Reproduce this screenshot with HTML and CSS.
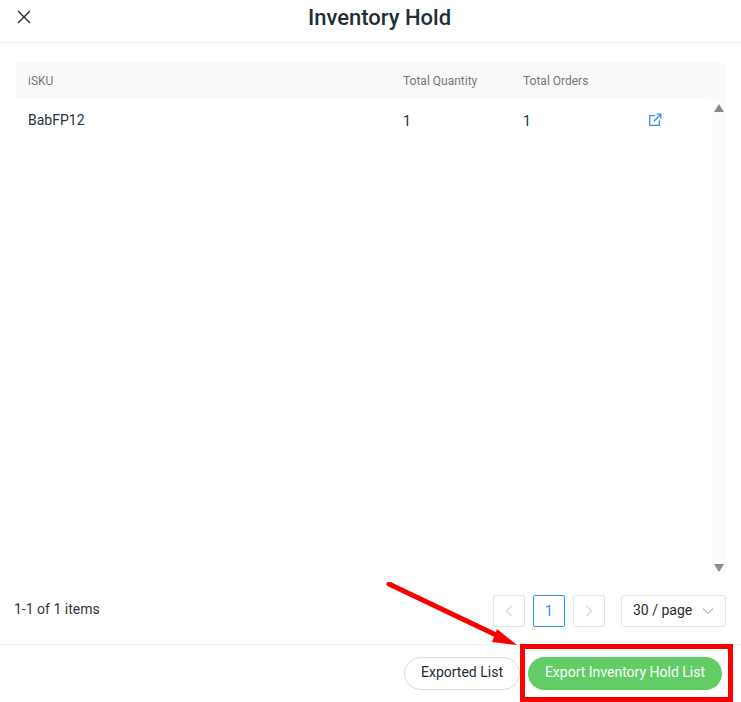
FILE: index.html
```html
<!DOCTYPE html>
<html lang="en">
<head>
<meta charset="utf-8">
<title>Inventory Hold</title>
<link rel="stylesheet" href="styles.css">
</head>
<body>
<div class="drawer">
  <header class="head">
    <svg class="close" width="14" height="14" viewBox="0 0 14 14"><path d="M1 1l12 12M13 1L1 13" stroke="#1f2d33" stroke-width="1.4" fill="none"/></svg>
    <h1 class="title">Inventory Hold</h1>
  </header>
  <main class="body">
    <div class="thead">
      <div class="c-sku">iSKU</div>
      <div class="c-qty">Total Quantity</div>
      <div class="c-ord">Total Orders</div>
    </div>
    <div class="tbody">
      <div class="rows">
        <div class="row">
          <div class="c-sku sku">BabFP12</div>
          <div class="c-qty num">1</div>
          <div class="c-ord num">1</div>
          <svg class="link" width="14" height="14" viewBox="0 0 14 14" fill="none" stroke="#2f8df5" stroke-width="1.3"><path d="M7 2.6H1.7v9.8h9.7V7.2"/><path d="M5.6 8.5L12.6 1.5M8.6 1.2h4.2v4.2"/></svg>
        </div>
      </div>
      <div class="scroll">
        <span class="tri up"></span>
        <span class="tri down"></span>
      </div>
    </div>
    <div class="pager">
      <div class="total">1-1 of 1 items</div>
      <div class="pages">
        <div class="pg"><svg width="8" height="12" viewBox="0 0 8 12"><path d="M6.5 1L1.5 6l5 5" stroke="#d2d5d7" stroke-width="1.1" fill="none"/></svg></div>
        <div class="pg on">1</div>
        <div class="pg"><svg width="8" height="12" viewBox="0 0 8 12"><path d="M1.5 1l5 5-5 5" stroke="#d2d5d7" stroke-width="1.1" fill="none"/></svg></div>
        <div class="size"><span class="size-text">30 / page</span><svg width="12" height="8" viewBox="0 0 12 8"><path d="M1 1.5l5 5 5-5" stroke="#b8bcbf" stroke-width="1.1" fill="none"/></svg></div>
      </div>
    </div>
  </main>
  <footer class="foot">
    <button class="btn ghost">Exported List</button>
    <button class="btn primary">Export Inventory Hold List</button>
  </footer>
</div>
<svg class="arrow" width="150" height="80" viewBox="0 0 150 80"><path d="M3 2L108 52" stroke="#f60000" stroke-width="5" stroke-linecap="round" fill="none"/><path d="M131 63L106 60L111 47Z" fill="#f60000"/></svg>
<div class="mark"></div>
</body>
</html>
```
FILE: styles.css
```css
* { box-sizing: border-box; }
html, body { margin: 0; padding: 0; }
body {
  position: relative;
  width: 741px;
  height: 702px;
  overflow: hidden;
  background: #fff;
  font-family: Roboto, "Liberation Sans", sans-serif;
  color: #1f2d33;
}
.drawer { display: flex; flex-direction: column; height: 702px; }
.head {
  height: 43px;
  flex: none;
  display: flex;
  align-items: center;
  justify-content: center;
  border-bottom: 1px solid #eceeef;
  position: relative;
  padding: 0 0 7px 18px;
}
.close { position: absolute; left: 17px; top: 10px; }
.title { margin: 0; font-size: 22px; font-weight: 500; line-height: 32px; color: #1f3038; }
.body { flex: 1; padding: 20px 15px 0 16px; display: flex; flex-direction: column; }
.thead {
  height: 36px;
  background: #f9f9f9;
  display: flex;
  align-items: center;
  font-size: 12px;
  color: #6f7a80;
}
.c-sku { width: 387px; padding-left: 12px; flex: none; }
.c-qty { width: 120px; flex: none; }
.c-ord { width: 120px; flex: none; }
.tbody { height: 476px; display: flex; }
.rows { flex: 1; }
.row { display: flex; align-items: flex-start; position: relative; height: 44px; padding-top: 12px; }
.sku { font-size: 14px; line-height: 18px; color: #26333a; }
.num { font-size: 14px; line-height: 20px; color: #1f2d33; }
.link { margin-left: 5px; margin-top: 2px; }
.scroll {
  width: 15px;
  flex: none;
  background: #fbfbfb;
  display: flex;
  flex-direction: column;
  justify-content: space-between;
  align-items: center;
  padding: 5px 0 3px;
}
.tri { width: 0; height: 0; border-left: 5px solid transparent; border-right: 5px solid transparent; }
.tri.up { border-bottom: 8px solid #8a8a8a; }
.tri.down { border-top: 8px solid #8a8a8a; }
.pager { display: flex; justify-content: space-between; align-items: center; height: 32px; margin-top: 20px; margin-left: -2px; }
.total { font-size: 14px; color: #2b383f; position: relative; top: -2px; }
.pages { display: flex; gap: 8px; }
.pg {
  width: 32px;
  height: 32px;
  border: 1px solid #e2e4e5;
  border-radius: 2px;
  display: flex;
  align-items: center;
  justify-content: center;
  font-size: 14px;
}
.pg.on { border-color: #2f8df5; color: #2f8df5; }
.size {
  margin-left: 8px;
  width: 105px;
  height: 32px;
  border: 1px solid #e2e4e5;
  border-radius: 3px;
  display: flex;
  align-items: center;
  justify-content: space-between;
  padding: 0 11px;
  font-size: 14px;
  color: #1f2d33;
}
.size-text { padding-bottom: 2px; }
.foot {
  margin-top: 17px;
  height: 58px;
  flex: none;
  border-top: 1px solid #eceeef;
  display: flex;
  justify-content: flex-end;
  gap: 8px;
  padding: 12px 19px 0 0;
}
.btn {
  height: 33px;
  border-radius: 17px;
  font-family: inherit;
  font-size: 14px;
  padding: 0 0 3px;
}
.ghost { width: 116px; background: #fff; border: 1px solid #d9dbdc; color: #1f2d33; }
.primary { width: 194px; background: #62cc66; border: 0; color: #fff; }
.arrow { position: absolute; left: 386px; top: 582px; }
.mark {
  position: absolute;
  left: 520px;
  top: 644px;
  width: 213px;
  height: 58px;
  border: 5px solid #f60000;
}
```
